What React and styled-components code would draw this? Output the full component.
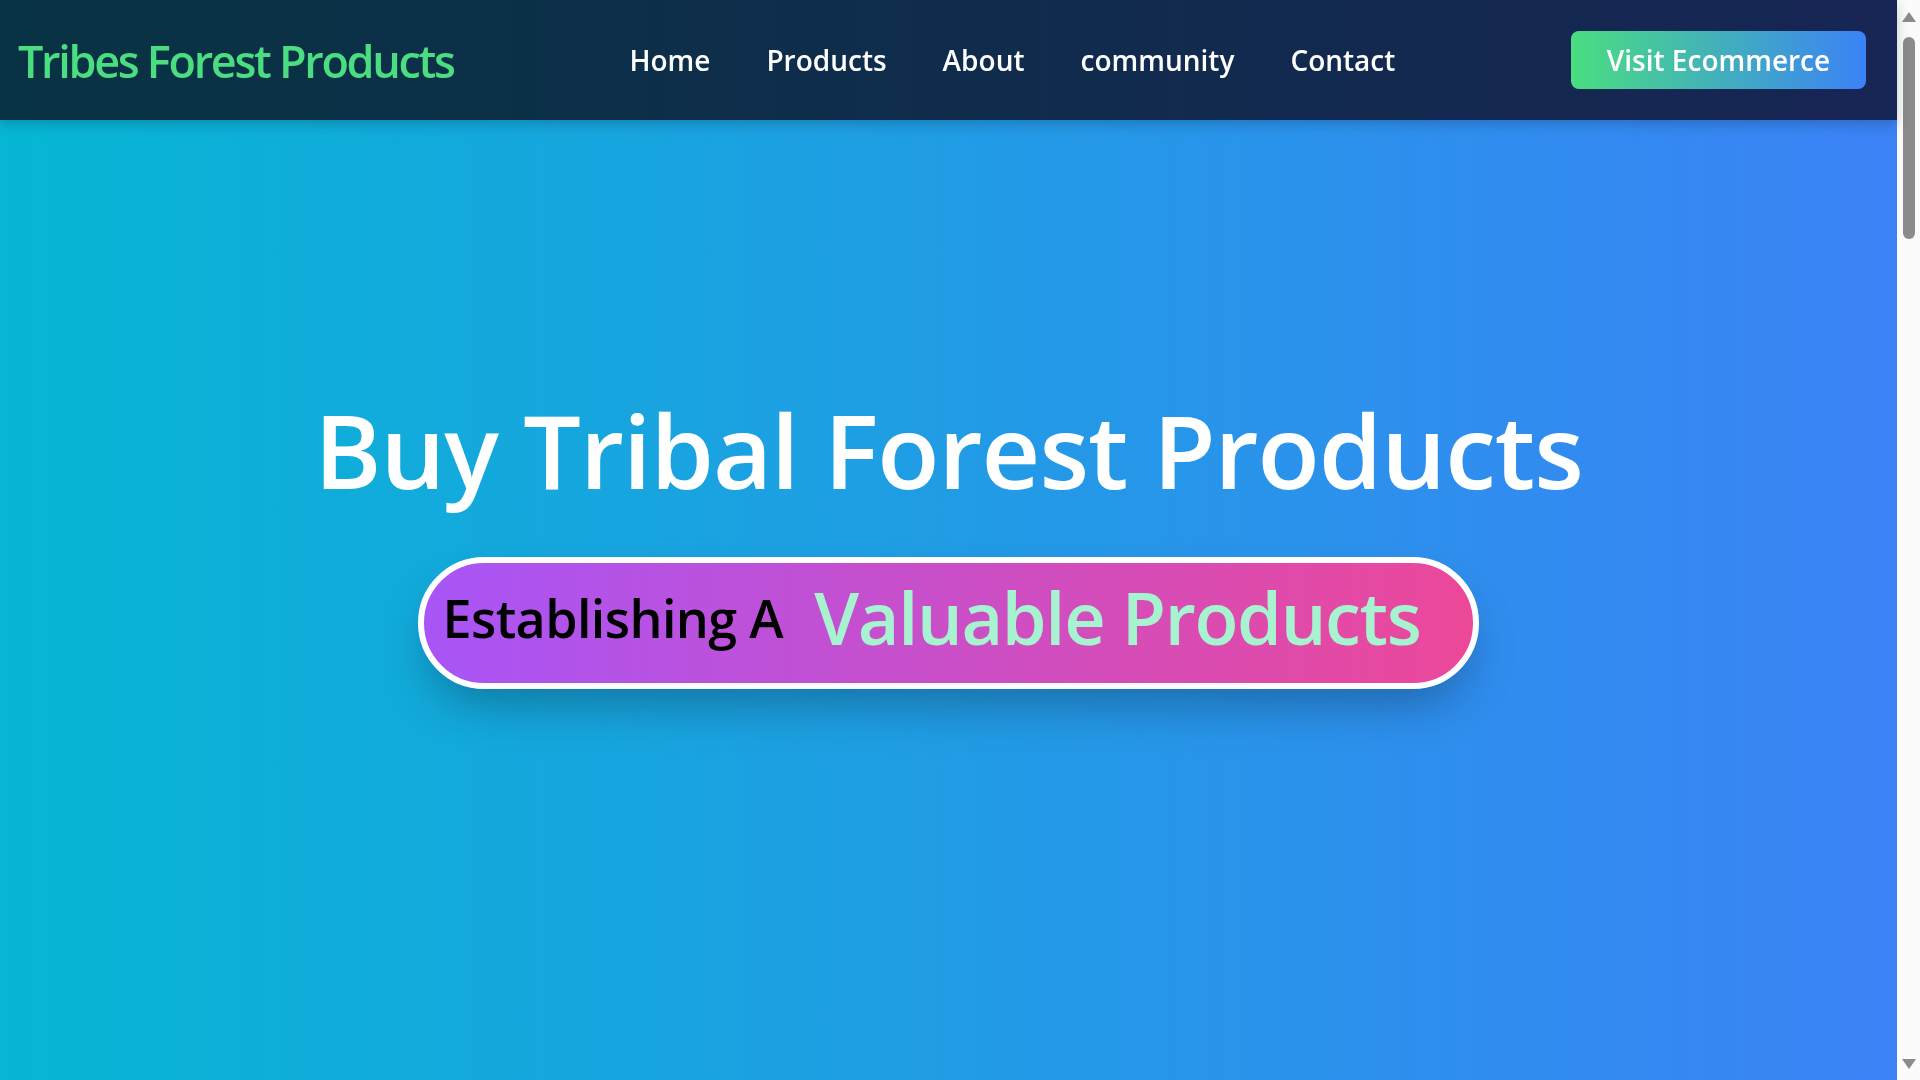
import React from "react"
import styled, { createGlobalStyle } from "styled-components"

const GlobalStyle = createGlobalStyle`
    * {
        box-sizing: border-box;
    }
    body {
        margin: 0 23px 0 0;
        font-family: "Open Sans", "Noto Sans", "Liberation Sans", sans-serif;
        background: #ffffff;
    }
`

const StyledNav = styled.nav`
    position: fixed;
    top: 0;
    left: 0;
    right: 23px;
    z-index: 10;
    height: 120px;
    display: flex;
    align-items: center;
    justify-content: space-between;
    padding: 0 31px 0 18px;
    background: linear-gradient(to right, #083344, #172554);
    box-shadow: 0 4px 12px rgba(0, 0, 0, 0.2);
`

const Logo = styled.a`
    font-size: 45px;
    font-weight: 600;
    color: #4ade80;
    letter-spacing: -2.3px;
    text-decoration: none;
`

const StyledUl = styled.ul`
    display: flex;
    gap: 56px;
    list-style: none;
    margin: 0;
    padding: 0;
`

const StyledLink = styled.a`
    font-size: 28px;
    font-weight: 600;
    color: #ffffff;
    text-decoration: none;
`

const ShopButton = styled.a`
    display: flex;
    align-items: center;
    justify-content: center;
    width: 295px;
    height: 58px;
    border-radius: 8px;
    background: linear-gradient(to right, #4ade80, #3b82f6);
    font-size: 28px;
    font-weight: 600;
    color: #ffffff;
    text-decoration: none;
`

const Hero = styled.section`
    min-height: 100vh;
    display: flex;
    flex-direction: column;
    align-items: center;
    justify-content: center;
    gap: 46px;
    padding-bottom: 2px;
    background: linear-gradient(to right, #06b6d4, #3b82f6);
`

const Title = styled.h1`
    margin: 0;
    font-size: 102px;
    font-weight: 600;
    line-height: 1.2;
    color: #ffffff;
    letter-spacing: -1px;
`

const Pill = styled.div`
    display: flex;
    align-items: center;
    gap: 31px;
    height: 132px;
    padding: 0 53px 12px 19px;
    border: 6px solid #ffffff;
    border-radius: 9999px;
    background: linear-gradient(to right, #a855f7, #ec4899);
    box-shadow: 0 25px 50px -12px rgba(0, 0, 0, 0.3);
`

const Lead = styled.span`
    font-size: 52px;
    font-weight: 600;
    color: #000000;
    letter-spacing: -0.6px;
`

const Accent = styled.span`
    font-size: 72px;
    font-weight: 600;
    color: #a7f3d0;
    letter-spacing: -1.3px;
`

const Section = styled.section`
    height: 1100px;
    background: ${props => props.$tint};
`

// page scrollbar as the reference shows it
const ScrollTrack = styled.div`
    position: fixed;
    top: 0;
    right: 0;
    bottom: 0;
    width: 23px;
    display: flex;
    flex-direction: column;
    align-items: center;
    padding: 12px 0 11px;
    background: #fbfbfb;
`

const Arrow = styled.span`
    width: 0;
    height: 0;
    border-left: 7px solid transparent;
    border-right: 7px solid transparent;
    ${props => props.$down
        ? "border-top: 10px solid #8b8b8b; margin-top: auto;"
        : "border-bottom: 10px solid #8b8b8b;"}
`

const Thumb = styled.span`
    width: 12px;
    height: 202px;
    margin-top: 15px;
    border-radius: 6px;
    background: #8b8b8b;
`

const links = ["Home", "Products", "About", "community", "Contact"]

const App = () => {

    return (
        <>
            <GlobalStyle />
            <StyledNav>
                <Logo href="#">Tribes Forest Products</Logo>
                <StyledUl>
                    {links.map(link => (
                        <li key={link}>
                            <StyledLink href="#">{link}</StyledLink>
                        </li>
                    ))}
                </StyledUl>
                <ShopButton href="#">Visit Ecommerce</ShopButton>
            </StyledNav>
            <Hero>
                <Title>Buy Tribal Forest Products</Title>
                <Pill>
                    <Lead>Establishing A</Lead>
                    <Accent>Valuable Products</Accent>
                </Pill>
            </Hero>
            <Section $tint="#f0fdf4" />
            <Section $tint="#ffffff" />
            <Section $tint="#ecfeff" />
            <Section $tint="#ffffff" />
            <ScrollTrack>
                <Arrow />
                <Thumb />
                <Arrow $down />
            </ScrollTrack>
        </>
    )
}

export default App
